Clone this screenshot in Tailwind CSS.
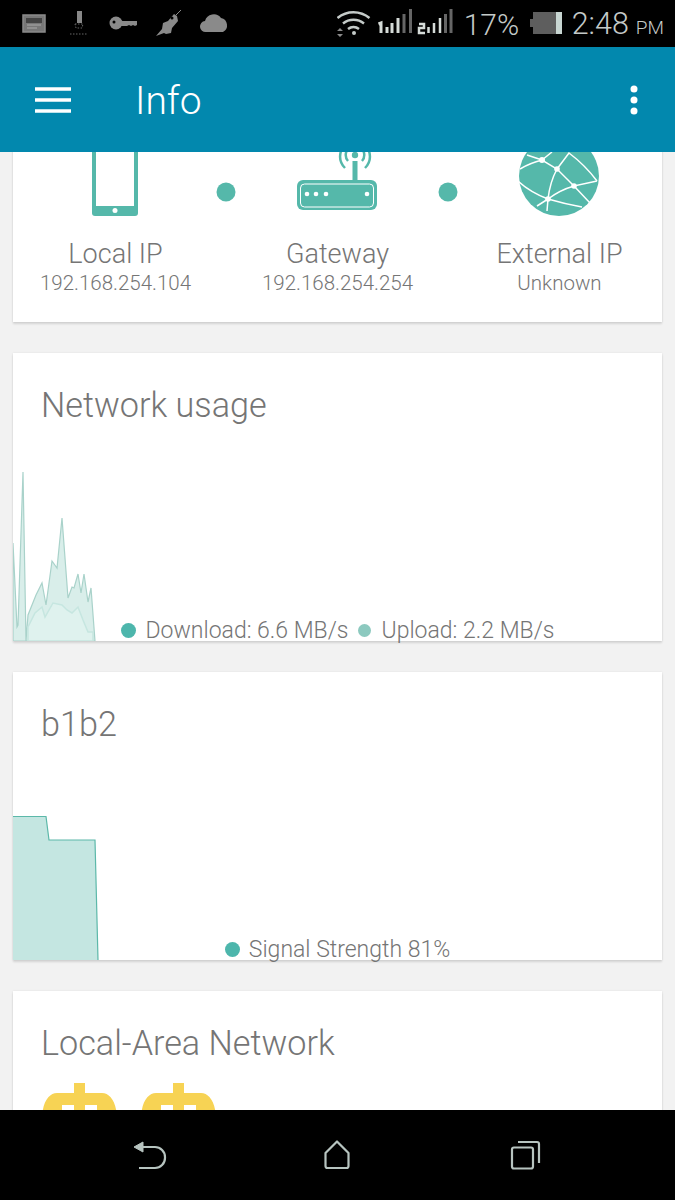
<!DOCTYPE html>
<html lang="en">
  <head>
    <meta charset="UTF-8" />
    <title>Info</title>
    <script src="https://cdn.jsdelivr.net/npm/@tailwindcss/browser@4"></script>
  </head>
  <body class="bg-black">
    <div class="w-[675px] h-[1200px] flex flex-col overflow-hidden font-['Roboto',sans-serif] text-[#757575]">

      <!-- Status bar -->
      <div class="h-[47px] shrink-0 bg-black flex items-center justify-between">
        <svg class="w-[240px] h-[47px]" viewBox="0 0 240 47">
          <rect x="23" y="15" width="22" height="17" fill="#777" stroke="#8a8a8a" stroke-width="1.5" />
          <path d="M26 23h16v-5H26z" fill="#444" />
          <path d="M27 25h14M27 28h10" stroke="#aaa" />
          <path d="M77 11h5v12h-5z" fill="#888" />
          <path d="M75 24h8l-1 4h-6zM70 34h18" stroke="#666" stroke-dasharray="1.5 1.5" fill="none" />
          <circle cx="116" cy="23" r="6.500" fill="#8a8a8a" />
          <circle cx="114" cy="22" r="1.500" fill="#000" />
          <path d="M121 21h16v4l-2 1-2-1-2 1-2-1-2 1h-6z" fill="#8a8a8a" />
          <path d="M156 36l6-7 1-6 5-2 6-7 3 2 1 5-6 7-1 5-5 1-2-1z" fill="#8a8a8a" />
          <path d="M176 15l5-5" stroke="#8a8a8a" />
          <circle cx="172" cy="18" r="1.500" fill="#000" />
          <path d="M206 32a5.500 5.500 0 0 1-1-11 9 9 0 0 1 16-3 7.500 7.500 0 0 1 2 14z" fill="#8a8a8a" />
        </svg>
        <div class="flex items-center">
          <svg class="w-[124px] h-[47px]" viewBox="335 0 124 47">
            <path d="M335.500 18a25 25 0 0 1 32 0M341 23.500a17 17 0 0 1 21 0M346 29a9 9 0 0 1 11 0" fill="none" stroke="#c4cac8" stroke-width="2.500" />
            <circle cx="352" cy="33" r="2" fill="#c4cac8" />
            <path d="M335 31l3-3 3 3zM335 34l3 3 3-3z" fill="#8a8a8a" />
            <path d="M376.500 24l2.500-1v10M385 33v-6M390 33v-10M396 33v-15" stroke="#d5dbd8" stroke-width="3" fill="none" />
            <path d="M402 33v-19M408.500 33V9" stroke="#666" stroke-width="3" fill="none" />
            <path d="M417 24h5v4h-5v5h6M426.500 33v-6M432 33v-10M438 33v-15" stroke="#d5dbd8" stroke-width="2.500" fill="none" />
            <path d="M443.500 33v-19M449 33V9" stroke="#666" stroke-width="3" fill="none" />
          </svg>
          <span class="text-[30px] font-light leading-none text-[#c4cac8] ml-[3px] w-[59px] mt-[2px]">17%</span>
          <svg class="w-[32px] h-[30px] ml-[7px]" viewBox="0 0 32 30">
            <rect x="3" y="3" width="23" height="22" fill="#5e5e5e" />
            <rect x="0" y="10" width="3" height="8" fill="#5e5e5e" />
            <rect x="26" y="3" width="6" height="22" fill="#c8d6d2" />
          </svg>
          <span class="text-[30.500px] font-light leading-none text-[#c4cac8] ml-[10px] mt-[2px]">2:48</span>
          <span class="text-[19px] font-light leading-none text-[#c4cac8] ml-[7px] mr-[11px] mt-[7px]">PM</span>
        </div>
      </div>

      <!-- App bar -->
      <div class="h-[105px] shrink-0 bg-[#0288ae] flex items-center relative z-10 text-white">
        <svg class="w-[36px] h-[26px] ml-[35px]" viewBox="0 0 36 26">
          <path d="M0 2h36M0 13h36M0 24h36" stroke="#fff" stroke-width="3.500" />
        </svg>
        <span class="text-[39px] font-light ml-[64px] mt-[4px] leading-none">Info</span>
        <svg class="w-[8px] h-[30px] ml-auto mr-[37px]" viewBox="0 0 8 30">
          <circle cx="4" cy="4" r="3.500" fill="#fff" />
          <circle cx="4" cy="15" r="3.500" fill="#fff" />
          <circle cx="4" cy="26" r="3.500" fill="#fff" />
        </svg>
      </div>

      <!-- Scrolled content -->
      <main class="flex-1 overflow-hidden bg-[#f2f2f2] px-[13px] flex flex-col gap-[31px]">

        <!-- Addresses card, scrolled partly under the app bar -->
        <section class="mt-[-21px] h-[191px] pt-[1px] shrink-0 bg-white shadow-[0_2px_2px_rgba(0,0,0,0.12),0_0_2px_rgba(0,0,0,0.08)]">
          <div class="grid grid-cols-[111px_111px_111px_111px_111px] justify-center justify-items-center items-end h-[84px] mr-[1px]">
            <svg class="w-[46px] h-[84px]" viewBox="92 132 46 84">
              <rect x="92" y="120" width="46" height="96" rx="3" fill="#55b8aa" />
              <rect x="96" y="125" width="38" height="81" fill="#fff" />
              <circle cx="115" cy="210.500" r="2.500" fill="#fff" />
            </svg>
            <svg class="w-[20px] h-[20px] mb-[14px]" viewBox="0 0 20 20">
              <circle cx="10" cy="10" r="9.500" fill="#55b8aa" />
            </svg>
            <svg class="w-[80px] h-[84px]" viewBox="297 132 80 84">
              <rect x="297" y="180" width="80" height="30" rx="6" fill="#55b8aa" />
              <rect x="300.500" y="184" width="73" height="23" rx="4" fill="none" stroke="#fff" stroke-width="1" />
              <circle cx="307" cy="194" r="2.300" fill="#fff" />
              <circle cx="316" cy="194" r="2.300" fill="#fff" />
              <circle cx="326" cy="194" r="2.300" fill="#fff" />
              <circle cx="367" cy="194" r="2.300" fill="#fff" />
              <rect x="352.500" y="161" width="5" height="20" fill="#55b8aa" />
              <circle cx="355" cy="155" r="3.200" fill="#55b8aa" />
              <path d="M348 149a9 9 0 0 0 0 12M362 149a9 9 0 0 1 0 12M341 151a17 17 0 0 0 4 17M369 151a17 17 0 0 1-4 17" fill="none" stroke="#55b8aa" stroke-width="2.500" />
            </svg>
            <svg class="w-[20px] h-[20px] mb-[14px]" viewBox="0 0 20 20">
              <circle cx="10" cy="10" r="9.500" fill="#55b8aa" />
            </svg>
            <svg class="w-[80px] h-[84px]" viewBox="519 132 80 84">
              <circle cx="559" cy="176" r="40" fill="#55b8aa" />
              <path d="M520 169Q530 163 542 160L557 169L574 186L597 181M542 160L527 155M542 160L552 152M557 169L569 153Q585 165 597 181M557 169Q550 182 548 199M574 186L590 203M574 186Q560 190 548 199M548 199L537 206M548 199L547 211M518 181Q530 192 548 199Q565 204 582 207" fill="none" stroke="#fff" stroke-width="1.500" />
              <circle cx="542" cy="160" r="3" fill="#fff" />
              <circle cx="557" cy="169" r="2.800" fill="#fff" />
              <circle cx="574" cy="186" r="2.800" fill="#fff" />
              <circle cx="548" cy="199" r="2.800" fill="#fff" />
            </svg>
          </div>
          <div class="grid grid-cols-[222px_222px_222px] justify-center justify-items-center mt-[24px] text-center">
            <div>
              <p class="text-[27px] font-light leading-[29px]">Local IP</p>
              <p class="text-[20.500px] font-light leading-[28px]">192.168.254.104</p>
            </div>
            <div>
              <p class="text-[27px] font-light leading-[29px]">Gateway</p>
              <p class="text-[20.500px] font-light leading-[28px]">192.168.254.254</p>
            </div>
            <div>
              <p class="text-[27px] font-light leading-[29px]">External IP</p>
              <p class="text-[20.500px] font-light leading-[28px]">Unknown</p>
            </div>
          </div>
        </section>

        <!-- Network usage -->
        <section class="relative h-[288px] shrink-0 bg-white shadow-[0_2px_2px_rgba(0,0,0,0.12),0_0_2px_rgba(0,0,0,0.08)] flex flex-col justify-between">
          <h2 class="text-[34.200px] font-light leading-[38px] pl-[28px] pt-[33px]">Network usage</h2>
          <svg class="absolute left-0 bottom-0 w-[100px] h-[190px]" viewBox="13 451 100 190">
            <path d="M13 641V543L17 627L18 625L23 472L26 641L28 615L36 595L42 583L46 605L52 561L57 568L62 518L68 598L72 587L74 588L78 574L81 593L84 574L88 602L91 588L95 641Z" fill="#d9eeea" stroke="#a9d2ca" stroke-width="1.200" />
            <path d="M28 641V627L35 613L42 607L45 617L53 603L62 605L67 610L72 613L78 607L83 620L88 632L93 632V641Z" fill="#dff2ee" stroke="#c6e6e0" stroke-width="1.500" />
          </svg>
          <div class="relative flex justify-center items-center h-[24px] mb-[-1px] text-[23px] font-light leading-none">
            <span class="w-[15px] h-[15px] rounded-full bg-[#4db6ac]"></span>
            <span class="ml-[10px]">Download: 6.6 MB/s</span>
            <span class="w-[13px] h-[13px] rounded-full bg-[#8cc9bf] ml-[9px]"></span>
            <span class="ml-[11px]">Upload: 2.2 MB/s</span>
          </div>
        </section>

        <!-- Wi-Fi signal -->
        <section class="relative h-[288px] shrink-0 bg-white shadow-[0_2px_2px_rgba(0,0,0,0.12),0_0_2px_rgba(0,0,0,0.08)] flex flex-col justify-between">
          <h2 class="text-[34.200px] font-light leading-[38px] pl-[28px] pt-[33px]">b1b2</h2>
          <svg class="absolute left-0 bottom-0 w-[90px] h-[150px]" viewBox="13 810 90 150">
            <path d="M13 960V816.500H46L49 840H95L98 960Z" fill="#c4e6e1" />
            <path d="M13 816.500H46L49 840H95L98 960" fill="none" stroke="#5cb8a9" stroke-width="1.200" />
          </svg>
          <div class="relative flex justify-center items-center h-[24px] mb-[-1px] text-[23px] font-light leading-none">
            <span class="w-[15px] h-[15px] rounded-full bg-[#4db6ac]"></span>
            <span class="ml-[9px]">Signal Strength 81%</span>
          </div>
        </section>

        <!-- Local-Area Network -->
        <section class="h-[288px] shrink-0 bg-white shadow-[0_2px_2px_rgba(0,0,0,0.12),0_0_2px_rgba(0,0,0,0.08)]">
          <h2 class="text-[34.200px] font-light leading-[38px] pl-[28px] pt-[33px]">Local-Area Network</h2>
          <div class="flex pl-[29px] gap-[24px] mt-[21px]">
            <svg class="w-[75px] h-[60px]" viewBox="0 0 75 60">
              <path d="M32 0h11v10h17c8 0 15 9 15 27v23H0V37C0 19 7 10 15 10h17z" fill="#f7d354" />
              <path d="M20 22h12v10H20zM43 22h12v10H43z" fill="#fff" />
            </svg>
            <svg class="w-[75px] h-[60px]" viewBox="0 0 75 60">
              <path d="M32 0h11v10h17c8 0 15 9 15 27v23H0V37C0 19 7 10 15 10h17z" fill="#f7d354" />
              <path d="M20 22h12v10H20zM43 22h12v10H43z" fill="#fff" />
            </svg>
          </div>
        </section>
      </main>

      <!-- Navigation bar -->
      <nav class="h-[90px] shrink-0 bg-black relative z-10">
        <svg class="w-[675px] h-[90px]" viewBox="0 1110 675 90">
          <path d="M134 1147l9-5v10z" fill="#b7c4c0" stroke="#b7c4c0" stroke-linejoin="round" />
          <path d="M143 1147h12a10 10 0 0 1 10 10v1a10 10 0 0 1-10 10h-16" fill="none" stroke="#b7c4c0" stroke-width="2.200" />
          <path d="M325.500 1153l11.500-11.500 11.500 11.500v13a2 2 0 0 1-2 2h-19a2 2 0 0 1-2-2z" fill="none" stroke="#b7c4c0" stroke-width="2.200" stroke-linejoin="round" />
          <rect x="512" y="1147.500" width="21" height="21" rx="2" fill="none" stroke="#b7c4c0" stroke-width="2.200" />
          <path d="M518 1142h19a2 2 0 0 1 2 2v19" fill="none" stroke="#b7c4c0" stroke-width="2.200" />
        </svg>
      </nav>
    </div>
  </body>
</html>
